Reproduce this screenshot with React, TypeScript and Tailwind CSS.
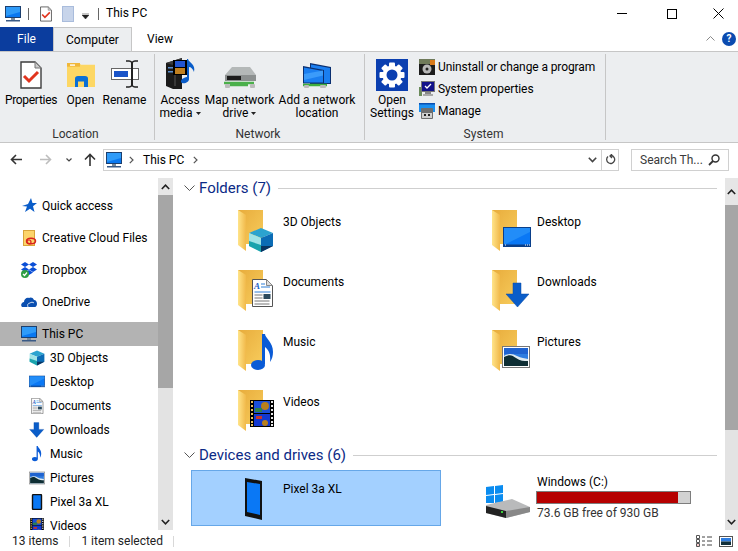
import React from "react";

const Monitor = ({ s = 16 }: { s?: number }) => (
  <svg width={s} height={s} viewBox="0 0 16 16" className="shrink-0">
    <rect x="0.5" y="0.5" width="15" height="11" fill="#0a78f0" stroke="#1c3f6e" />
    <path d="M1 1h14v5L1 10z" fill="#2f9bf8" />
    <rect x="6" y="12" width="4" height="2" fill="#7a8a9a" />
    <rect x="1" y="14" width="14" height="1.5" fill="#3a5a86" />
  </svg>
);

const CheckDoc = ({ w = 11, h = 15 }: { w?: number; h?: number }) => (
  <svg width={w} height={h} viewBox="0 0 22 28" className="shrink-0">
    <path d="M1 1h14l6 6v20H1z" fill="#fff" stroke="#3d3d3d" strokeWidth="1.4" />
    <path d="M15 1v6h6z" fill="#ccc" stroke="#777" />
    <path d="M4 15l5 5 9-9" fill="none" stroke="#e1341e" strokeWidth="3" />
  </svg>
);

const Folder = ({ children }: { children?: React.ReactNode }) => (
  <svg width="48" height="48" viewBox="0 0 48 48" className="shrink-0 overflow-visible">
    <defs>
      <linearGradient id="fb" x1="0" x2="1" y1="0" y2="1">
        <stop offset="0" stopColor="#e8ac3c" />
        <stop offset="1" stopColor="#f7cc5c" />
      </linearGradient>
      <linearGradient id="ff" x1="0" x2="1" y1="0" y2="0">
        <stop offset="0" stopColor="#ffe48a" />
        <stop offset="1" stopColor="#f1b94a" />
      </linearGradient>
    </defs>
    <rect x="0" y="0" width="25" height="34" fill="url(#fb)" />
    <path d="M0 0l8 5v36L0 35z" fill="url(#ff)" />
    <path d="M8 34h6v4l-6 3z" fill="#fff" />
    {children}
  </svg>
);

const CubeParts = () => (
  <>
    <path d="M23 18l12 5-12 5-12-5z" fill="#2ba3cf" />
    <path d="M11 23l12 5v14l-12-6z" fill="#9fe3e6" />
    <path d="M11 31l12 4v7l-12-6z" fill="#1aa3ad" />
    <path d="M23 28l12-5v13l-12 6z" fill="#0b6cb5" />
    <path d="M23 36l12 0-12 6z" fill="#0a3460" />
  </>
);

const DocParts = () => (
  <>
    <path d="M14.5 9.5h14l6 6v21h-20z" fill="#fff" stroke="#555" />
    <path d="M28.5 9.5v6h6z" fill="#ddd" stroke="#888" />
    <text x="16" y="19" fontSize="9" fontStyle="italic" fontWeight="700" fill="#1c5fc4" fontFamily="Liberation Serif, serif">A</text>
    <path d="M23 14h4M23 17h9" stroke="#2f7fd6" strokeWidth="1" />
    <path d="M16.5 22h16" stroke="#2f7fd6" strokeWidth="1" />
    <path d="M16.5 25h8M16.5 28h8M16.5 31h15M16.5 34h15" stroke="#777" strokeWidth="1" />
    <rect x="25.5" y="24" width="7" height="5" fill="#2b4a5e" />
  </>
);

const NoteParts = () => (
  <>
    <path d="M24 4h3c0 4 8 8 8 18 0 4-1 7-3 10 1-7-1-12-5-15v17h-3z" fill="#0a5bd6" />
    <ellipse cx="20" cy="35" rx="7" ry="5" fill="#0a5bd6" />
  </>
);

const DesktopParts = () => (
  <>
    <rect x="11.5" y="17.5" width="27" height="19" fill="#0a78f5" stroke="#0a3f8a" />
    <path d="M12 18h26v4L12 35z" fill="#2c96fa" opacity="0.7" />
    <rect x="12" y="34.5" width="26" height="1.5" fill="#0a3f8a" />
    <path d="M13 35h1M33 35h1M35 35h1M37 35h1" stroke="#fff" />
  </>
);

const ArrowParts = () => (
  <path d="M21 13h8v11h8L25.500 37 14 24h7z" fill="#0a5dc9" stroke="#0a4aa5" strokeWidth="0.5" />
);

const PictureParts = () => (
  <>
    <rect x="10.500" y="16.500" width="27" height="21" fill="#fff" stroke="#777" />
    <rect x="12" y="18" width="24" height="18" fill="#2f7de0" />
    <rect x="12" y="18" width="24" height="6" fill="#1f63d0" />
    <path d="M12 26c5-3 9-2 13 0s8 2 11 3v7H12z" fill="#dfeaf0" />
    <path d="M12 27c6-3 8-2 12 1s8 3 12 3v5H12z" fill="#0e2e34" />
  </>
);

const FilmParts = () => (
  <>
    <rect x="12" y="10" width="24" height="27" fill="#000" />
    {[11, 15, 19, 23, 27, 31, 34].map((y) => (
      <React.Fragment key={y}>
        <rect x="13" y={y} width="2" height="2" fill="#e8c060" />
        <rect x="33" y={y} width="2" height="2" fill="#e8e8e8" />
      </React.Fragment>
    ))}
    <rect x="16" y="11" width="16" height="12" fill="#1a4fd8" />
    <rect x="16" y="24" width="16" height="12" fill="#1238d0" />
    <circle cx="27" cy="16" r="4" fill="#b8801c" />
    <rect x="17" y="18" width="7" height="4" fill="#2f804a" />
    <circle cx="27" cy="33" r="3" fill="#b8801c" />
    <rect x="18" y="26" width="6" height="3" fill="#c9342a" />
  </>
);

const small = (children: React.ReactNode, vb = "0 0 48 48") => (
  <svg width="16" height="16" viewBox={vb} className="shrink-0">
    {children}
  </svg>
);

const Nav3D = () => small(<CubeParts />, "10 17 26 26");
const NavDesktop = () => small(<DesktopParts />, "11 14 28 28");
const NavDoc = () => small(<DocParts />, "10 9 28 28");
const NavArrow = () => small(<ArrowParts />, "13 12 26 26");
const NavNote = () => small(<NoteParts />, "6 4 38 38");
const NavPic = () => small(<PictureParts />, "10 13 28 28");
const NavVideo = () => small(<FilmParts />, "10 10 28 28");

const Phone = ({ s = 16 }: { s?: number }) => (
  <svg width={s} height={s} viewBox="0 0 16 16" className="shrink-0">
    <rect x="3.500" y="0.500" width="9" height="15" rx="1" fill="#0a78f5" stroke="#111" strokeWidth="1.400" />
  </svg>
);

const Chevron = ({ className = "" }: { className?: string }) => (
  <svg width="11" height="7" viewBox="0 0 11 7" className={className}>
    <path d="M0.500 0.500l5 5 5-5" fill="none" stroke="#555" strokeWidth="1" />
  </svg>
);

const Caret = () => (
  <svg width="5" height="3" viewBox="0 0 5 3" className="ml-[3px] inline-block align-middle">
    <path d="M0 0h5L2.500 3z" fill="#222" />
  </svg>
);

function NavRow({ icon, label, sub, sel, gap }: { icon: React.ReactNode; label: string; sub?: boolean; sel?: boolean; gap?: boolean }) {
  return (
    <div className={`flex h-6 items-center shrink-0 ${sel ? "bg-[#b3b3b3]" : ""} ${gap ? "mb-2" : ""} ${sub ? "pl-[29px]" : "pl-[21px]"}`}>
      <span className="flex w-[21px] shrink-0 items-center">{icon}</span>
      <span className="whitespace-nowrap">{label}</span>
    </div>
  );
}

function BigBtn({ w, icon, lines }: { w: string; icon: React.ReactNode; lines: React.ReactNode[] }) {
  return (
    <div className={`flex flex-col items-center ${w}`}>
      <div className="flex h-[33px] items-end justify-center">{icon}</div>
      <div className="mt-[5px] text-center leading-[13px] whitespace-nowrap">
        {lines.map((l, i) => (
          <div key={i}>{l}</div>
        ))}
      </div>
    </div>
  );
}

const FolderCell = ({ name, children }: { name: string; children: React.ReactNode }) => (
  <div className="flex pt-[2px] pl-[46px]">
    <Folder>{children}</Folder>
    <span className="mt-[4px] ml-[-3px] leading-[16px]">{name}</span>
  </div>
);

const Heading = ({ text }: { text: string }) => (
  <div className="flex h-5 items-center pr-[8px] pl-[10px]">
    <Chevron />
    <span className="ml-[4px] text-[15px] text-[#0b2a86] whitespace-nowrap">{text}</span>
    <span className="ml-[7px] h-px flex-1 bg-[#cfcfcf]" />
  </div>
);

const Scroll = ({ w, nav }: { w: string; nav?: boolean }) => (
  <div className={`flex shrink-0 flex-col bg-[#e3e3e3] ${w}`}>
    <div className={`flex items-center justify-center bg-[#e6e6e6] ${nav ? "h-[17px]" : "h-[27px]"}`}>
      <svg width="9" height="6" viewBox="0 0 9 6"><path d="M0.800 5L4.500 1.200 8.200 5" fill="none" stroke="#222" strokeWidth="1.600" /></svg>
    </div>
    <div className={`bg-[#a6a6a6] ${nav ? "h-[193px]" : "h-[225px]"}`} />
    <div className="flex-1" />
    <div className="flex h-[17px] items-center justify-center">
      <svg width="9" height="6" viewBox="0 0 9 6"><path d="M0.800 1L4.500 4.800 8.200 1" fill="none" stroke="#222" strokeWidth="1.600" /></svg>
    </div>
  </div>
);

export default function App() {
  return (
    <div className="flex h-[551px] w-[738px] flex-col overflow-hidden bg-white font-[Roboto,sans-serif] text-[12px] text-black">
      {/* Title bar */}
      <div className="flex h-[27px] items-center pl-[5px]">
        <Monitor />
        <span className="ml-[7px] h-[12px] w-px bg-[#666]" />
        <span className="ml-[11px] flex"><CheckDoc w={12} h={16} /></span>
        <span className="ml-[10px] h-[16px] w-[12px] border border-[#a9bcdc] bg-[#c7d4ea]" />
        <svg width="7" height="6" viewBox="0 0 7 6" className="ml-[8px] mt-[4px]"><path d="M0 0h7M0 2h7L3.500 6z" fill="#222" stroke="#222" strokeWidth="0.500" /></svg>
        <span className="ml-[9px] h-[12px] w-px bg-[#666]" />
        <span className="ml-[7px] mb-[1px] text-[12px] whitespace-nowrap">This PC</span>
        <div className="ml-auto flex items-center">
          <svg width="10" height="1" className="mr-[40px]"><rect width="10" height="1" fill="#000" /></svg>
          <svg width="10" height="10" className="mr-[36px]"><rect x="0.500" y="0.500" width="9" height="9" fill="none" stroke="#000" /></svg>
          <svg width="11" height="11" className="mr-[14px]"><path d="M0.500 0.500l10 10M10.500 0.500l-10 10" stroke="#000" strokeWidth="1" /></svg>
        </div>
      </div>
      {/* Tabs */}
      <div className="relative flex h-[24px] items-stretch">
        <div className="flex w-[53px] items-center justify-center bg-[#0b3d9e] text-white">File</div>
        <div className="z-10 flex h-[24px] w-[79px] items-center justify-center border-x border-t border-[#c6c6c6] bg-[#eceef0]">Computer</div>
        <div className="ml-[15px] flex items-center">View</div>
        <div className="ml-auto flex items-center pr-[2px] pb-[1px]">
          <svg width="9" height="5" viewBox="0 0 9 5" className="mr-[7px]"><path d="M0.500 4.500l4-4 4 4" fill="none" stroke="#888" strokeWidth="1" /></svg>
          <span className="flex h-[14px] w-[14px] items-center justify-center rounded-full bg-[#0b4bb0] text-[10px] leading-none font-bold text-white">?</span>
        </div>
      </div>
      {/* Ribbon */}
      <div className="flex h-[92px] shrink-0 border-y border-[#c6c6c6] bg-[#eceef0]">
        <Group w="w-[155px]" label="Location">
          <BigBtn w="w-[62px]" icon={<CheckDoc w={22} h={28} />} lines={[<span className="tracking-[-0.3px]">Properties</span>]} />
          <BigBtn
            w="w-[37px]"
            icon={
              <svg width="28" height="24" viewBox="0 0 28 26" preserveAspectRatio="none" className="mb-[2px]">
                <path d="M0 0h12l2 2h14v24H0z" fill="#fdd764" />
                <path d="M0 0h13v4H0z" fill="#f0b73a" />
                <path d="M3 1.500h5v1.500H3z" fill="#fff" />
                <path d="M8 26V17a3 3 0 013-3h7a3 3 0 013 3v9h-4v-6h-6v6z" fill="#0a6fd6" />
              </svg>
            }
            lines={["Open"]}
          />
          <BigBtn
            w="w-[51px]"
            icon={
              <svg width="28" height="28" viewBox="0 0 28 28" className="mb-[1px]">
                <rect x="0.500" y="8.500" width="27" height="11" fill="#fff" stroke="#666" />
                <rect x="3" y="11" width="14" height="6" fill="#1a54c8" />
                <path d="M15 1h3c1 0 2 .5 3 1.500C22 1.500 23 1 24 1h3M15 27h3c1 0 2-.5 3-1.500 1 1 2 1.500 3 1.500h3" fill="none" stroke="#222" strokeWidth="1.600" />
                <rect x="20" y="2" width="2" height="24" fill="#222" />
              </svg>
            }
            lines={["Rename"]}
          />
        </Group>
        <Group w="w-[210px]" label="Network" pl="pl-[5px]">
          <BigBtn
            w="w-[40px]"
            icon={
              <svg width="32" height="32" viewBox="0 0 32 32">
                <path d="M2 6l16-5v31H9l-7-3z" fill="#1a1a1a" />
                <path d="M18 1L2 6l7 2 9-3z" fill="#3a3a3a" />
                <path d="M11 10v19" stroke="#555" />
                <rect x="4" y="10" width="5" height="1.500" fill="#5b8fd0" />
                <rect x="4" y="14" width="5" height="1.500" fill="#5b8fd0" />
                <rect x="9" y="3" width="14" height="15" fill="#000" />
                <rect x="11" y="4" width="10" height="6" fill="#2255d0" />
                <rect x="11" y="11" width="10" height="6" fill="#c08020" />
                <path d="M24 2c1 4 8 5 6 13-1-3-3-5-5-5v12c0 3-4 5-7 4-2-1-1-4 2-5 1-1 3-1 3-1V2z" fill="#0a5dc9" />
              </svg>
            }
            lines={[<>Access</>, <>media<Caret /></>]}
          />
          <BigBtn
            w="w-[79px]"
            icon={
              <svg width="32" height="22" viewBox="0 0 32 22">
                <path d="M8 0h18l6 8v6H1V8z" fill="#b4b8b8" />
                <path d="M1 8h31v6H1z" fill="#8c9090" />
                <path d="M3 9h14v4H3z" fill="#1c1c1c" />
                <path d="M0 16h30M6 18h18" stroke="#4bb04b" strokeWidth="2.500" />
                <rect x="1" y="17" width="5" height="4" rx="1" fill="#bbb" />
                <rect x="26" y="17" width="5" height="4" rx="1" fill="#bbb" />
              </svg>
            }
            lines={[<>Map network</>, <>drive<Caret /></>]}
          />
          <BigBtn
            w="w-[76px]"
            icon={
              <svg width="28" height="26" viewBox="0 0 28 26">
                <path d="M7 0l21 4v17H7z" fill="#0a2f70" />
                <path d="M8 1.500l19 3.500v15H8z" fill="#1a7ef0" />
                <path d="M0 3l21 4v13.500H0z" fill="#0a2f70" />
                <path d="M1 4.500l19 3.500v11.500H1z" fill="#1a7ef0" />
                <path d="M1 11l19-3.500v5L1 17z" fill="#3b9bfa" />
                <path d="M0 22h24" stroke="#3fae3f" strokeWidth="2.500" />
                <rect x="1" y="22" width="5" height="3" rx="1" fill="#bbb" />
                <rect x="17" y="22" width="6" height="3" rx="1" fill="#bbb" />
              </svg>
            }
            lines={[<>Add a network</>, <>location</>]}
          />
        </Group>
        <Group w="w-[241px]" label="System" pl="pl-[7px]">
          <BigBtn
            w="w-[40px]"
            icon={
              <svg width="32" height="32" viewBox="0 0 32 32" className="mb-[-2px]">
                <rect width="32" height="32" fill="#0b3fb0" />
                <g fill="#fff">
                  {[0, 45, 90, 135].map((a) => (
                    <rect key={a} x="13" y="3.500" width="6" height="25" rx="1" transform={`rotate(${a} 16 16)`} />
                  ))}
                  <circle cx="16" cy="16" r="9.500" />
                </g>
                <circle cx="16" cy="16" r="5.500" fill="#0b3fb0" />
              </svg>
            }
            lines={["Open", "Settings"]}
          />
          <div className="ml-[7px] flex flex-col">
            <SmallRow label="Uninstall or change a program">
              <svg width="16" height="16" viewBox="0 0 16 16">
                <rect y="0" width="16" height="16" fill="#1c1c1c" />
                <rect x="0" y="0" width="16" height="5" fill="#6f7a5a" />
                <rect x="11" y="1" width="5" height="5" fill="#d97a1a" />
                <circle cx="8" cy="10" r="4.500" fill="#b8b8b8" />
                <circle cx="8" cy="10" r="1.500" fill="#222" />
              </svg>
            </SmallRow>
            <SmallRow label="System properties">
              <svg width="16" height="16" viewBox="0 0 16 16">
                <rect x="0" y="6" width="3" height="9" fill="#6a8a5a" />
                <rect x="2.500" y="0.500" width="13" height="10" fill="#12128a" stroke="#777" />
                <path d="M6 5l2 2 4-4" fill="none" stroke="#fff" strokeWidth="1.300" />
                <rect x="6" y="11" width="6" height="2" fill="#888" />
                <rect x="4" y="13" width="10" height="2" fill="#aaa" />
              </svg>
            </SmallRow>
            <SmallRow label="Manage">
              <svg width="16" height="16" viewBox="0 0 16 16">
                <rect y="0" width="16" height="9" fill="#1a8ff0" />
                <rect y="0" width="16" height="1.500" fill="#0a4fb0" />
                <rect x="2" y="5" width="12" height="11" rx="1" fill="#6e6e6e" />
                <rect x="3" y="10" width="10" height="5" fill="#cfcfcf" />
                <rect x="5" y="11" width="2" height="2" fill="#222" />
                <rect x="9" y="11" width="2" height="2" fill="#222" />
              </svg>
            </SmallRow>
          </div>
        </Group>
      </div>
      {/* Address row */}
      <div className="flex h-[35px] shrink-0 items-center pb-[2px]">
        <svg width="12" height="11" viewBox="0 0 12 11" className="ml-[10px]"><path d="M12 5.500H1.500M6 1L1.500 5.500 6 10" fill="none" stroke="#333" strokeWidth="1.600" /></svg>
        <svg width="12" height="11" viewBox="0 0 12 11" className="ml-[18px]"><path d="M0 5.500h10.500M6 1l4.500 4.500L6 10" fill="none" stroke="#bdbdbd" strokeWidth="1.600" /></svg>
        <svg width="6" height="4" viewBox="0 0 6 4" className="ml-[14px]"><path d="M0.500 0.500L3 3l2.500-2.500" fill="none" stroke="#444" strokeWidth="1.200" /></svg>
        <svg width="12" height="13" viewBox="0 0 12 13" className="ml-[12px]"><path d="M6 13V1.500M1 6.500l5-5 5 5" fill="none" stroke="#333" strokeWidth="1.600" /></svg>
        <div className="ml-[7px] flex h-[22px] w-[516px] items-center border border-[#d0d0d0]">
          <span className="ml-[2px]"><Monitor /></span>
          <svg width="5" height="8" viewBox="0 0 5 8" className="ml-[7px]"><path d="M0.800 0.800L4 4 0.800 7.200" fill="none" stroke="#555" strokeWidth="1.200" /></svg>
          <span className="ml-[9px] whitespace-nowrap">This PC</span>
          <svg width="5" height="8" viewBox="0 0 5 8" className="ml-[9px]"><path d="M0.800 0.800L4 4 0.800 7.200" fill="none" stroke="#555" strokeWidth="1.200" /></svg>
          <svg width="9" height="6" viewBox="0 0 9 6" className="mr-[4px] ml-auto"><path d="M0.800 0.800L4.500 4.500 8.200 0.800" fill="none" stroke="#444" strokeWidth="1.600" /></svg>
          <div className="flex h-full w-[17px] items-center justify-center border-l border-[#d0d0d0]">
            <svg width="11" height="11" viewBox="0 0 11 11"><path d="M6 1.500A4 4 0 113 2.500M7 0L5 2l2 2" fill="none" stroke="#444" strokeWidth="1.300" /></svg>
          </div>
        </div>
        <div className="ml-[12px] flex h-[22px] w-[98px] items-center border border-[#d0d0d0] pl-[8px] text-[#3a3a3a]">
          <span className="whitespace-nowrap">Search Th...</span>
          <svg width="12" height="12" viewBox="0 0 12 12" className="mr-[8px] ml-auto"><circle cx="7.500" cy="4.500" r="3.500" fill="none" stroke="#333" strokeWidth="1.400" /><path d="M5 7l-4 4" stroke="#333" strokeWidth="1.800" /></svg>
        </div>
      </div>
      {/* Main */}
      <div className="flex min-h-0 flex-1">
        <div className="flex h-full w-[158px] shrink-0 flex-col overflow-hidden pt-[16px]">
          <NavRow gap label="Quick access" icon={<svg width="16" height="16" viewBox="0 0 16 16"><path d="M10 0l1.500 5H16l-4 3.200L13.500 14 9 10.800 4 14l2-5.500-5-.5 6-2z" fill="#0a5dc9" /></svg>} />
          <NavRow gap label="Creative Cloud Files" icon={<svg width="16" height="16" viewBox="0 0 16 16"><rect x="2.500" y="0.500" width="11" height="15" fill="#fcd46a" stroke="#d9a43a" /><ellipse cx="10" cy="11" rx="4.500" ry="2.800" fill="none" stroke="#d9231e" strokeWidth="1.500" /><ellipse cx="8" cy="12" rx="2" ry="2" fill="none" stroke="#d9231e" strokeWidth="1.200" /></svg>} />
          <NavRow gap label="Dropbox" icon={<svg width="16" height="16" viewBox="0 0 16 16"><path d="M4 0l4 2.500L4 5 0 2.500zM12 0l4 2.500L12 5 8 2.500zM4 5l4 2.500L4 10 0 7.500zM12 5l4 2.500L12 10 8 7.500zM8 8l4 2.500L8 13 4 10.500z" fill="#0a4ed6" /><circle cx="4" cy="12" r="4" fill="#2f9e44" /><path d="M2 12l1.500 1.500L6 10.500" fill="none" stroke="#fff" strokeWidth="1.200" /></svg>} />
          <NavRow gap label="OneDrive" icon={<svg width="16" height="16" viewBox="0 0 16 16"><path d="M1 13c-2-2 0-5 2-5 0-3 3-5 5-4 1-1 4-1 5 2 2 0 3 2 3 4 0 1-1 3-2 3z" fill="#0b4fb0" /><path d="M7 13c-1-2 0-4 2-4 1-1 3-1 4 0" fill="none" stroke="#fff" strokeWidth="0.800" /></svg>} />
          <NavRow sel label="This PC" icon={<Monitor />} />
          <NavRow sub label="3D Objects" icon={<Nav3D />} />
          <NavRow sub label="Desktop" icon={<NavDesktop />} />
          <NavRow sub label="Documents" icon={<NavDoc />} />
          <NavRow sub label="Downloads" icon={<NavArrow />} />
          <NavRow sub label="Music" icon={<NavNote />} />
          <NavRow sub label="Pictures" icon={<NavPic />} />
          <NavRow sub label="Pixel 3a XL" icon={<Phone />} />
          <NavRow sub label="Videos" icon={<NavVideo />} />
        </div>
        <Scroll w="w-[15px]" nav />
        <div className="min-w-0 flex-1 overflow-hidden pl-[1px]">
          <Heading text="Folders (7)" />
          <div className="mt-[10px] ml-[18px] grid h-[237px] grid-cols-[254px_254px] grid-rows-[60px_60px_60px_57px]">
            <FolderCell name="3D Objects"><CubeParts /></FolderCell>
            <FolderCell name="Desktop"><DesktopParts /></FolderCell>
            <FolderCell name="Documents"><DocParts /></FolderCell>
            <FolderCell name="Downloads"><ArrowParts /></FolderCell>
            <FolderCell name="Music"><NoteParts /></FolderCell>
            <FolderCell name="Pictures"><PictureParts /></FolderCell>
            <FolderCell name="Videos"><FilmParts /></FolderCell>
          </div>
          <Heading text="Devices and drives (6)" />
          <div className="mt-[5px] ml-[17px] flex">
            <div className="flex h-[56px] w-[250px] border border-[#66a7e8] bg-[#a3d0ff] pt-[7px] pl-[53px]">
              <svg width="19" height="43" viewBox="0 0 19 43" className="shrink-0">
                <path d="M0 0l17 3v39L0 38z" fill="#111" />
                <path d="M2 4l13 2v31L2 34z" fill="#0a78f5" />
              </svg>
              <span className="mt-[3px] ml-[19px] leading-[16px]">Pixel 3a XL</span>
            </div>
            <div className="ml-[45px] flex pt-[4px]">
              <svg width="44" height="34" viewBox="0 0 44 34" className="mt-[11px] shrink-0">
                <path d="M0 0l8-1v8l-8 1zM9-1l8-1v8l-8 1zM0 9l8-1v8H0zM9 8l8-1v8l-8 1z" fill="#0a8cf0" transform="translate(0 2)" />
                <path d="M0 20l26-6 18 8v5L20 33 0 28z" fill="#b9babb" />
                <path d="M0 21l20 5v7L0 28z" fill="#222" />
                <path d="M20 26l24-4v5L20 33z" fill="#888" />
                <rect x="15" y="26" width="2" height="2" fill="#3ad13a" />
              </svg>
              <div className="ml-[6px] flex w-[156px] flex-col">
                <div className="ml-[1px] leading-[16px]">Windows (C:)</div>
                <div className="mt-[1px] h-[13px] w-[155px] border border-[#7d7d7d] bg-[#d2d2d2]">
                  <div className="h-full bg-[#b60000]" style={{ width: "92%" }} />
                </div>
                <div className="mt-[1px] ml-[1px] leading-[16px] text-[#333] whitespace-nowrap">73.6 GB free of 930 GB</div>
              </div>
            </div>
          </div>
        </div>
        <Scroll w="w-[13px]" />
      </div>
      {/* Status */}
      <div className="flex h-[21px] shrink-0 items-center pt-[1px] pl-[12px] text-[#222]">
        <span className="whitespace-nowrap">13 items</span>
        <span className="ml-[11px] h-[11px] w-px bg-[#d8d8d8]" />
        <span className="ml-[11px] whitespace-nowrap">1 item selected</span>
        <span className="ml-[10px] h-[11px] w-px bg-[#d8d8d8]" />
        <svg width="16" height="13" viewBox="0 0 16 13" className="ml-auto">
          <path d="M0.500 0.500h3v3h-3zM0.500 4.500h3v3h-3zM0.500 8.500h3v3h-3z" fill="none" stroke="#555" />
          <path d="M6 2h3M11 2h5M6 6h3M11 6h5M6 10h3M11 10h5" stroke="#444" />
          <rect x="1.500" y="9.500" width="1" height="1" fill="#d33" />
        </svg>
        <svg width="14" height="11" viewBox="0 0 14 11" className="mr-[5px] ml-[7px]">
          <rect x="0.500" y="0.500" width="13" height="10" fill="#fff" stroke="#555" />
          <rect x="2" y="2" width="10" height="3.500" fill="#2f7de0" />
          <rect x="2" y="5.500" width="10" height="3.500" fill="#12303a" />
        </svg>
      </div>
    </div>
  );
}

function Group({ w, label, pl, children }: { w: string; label: string; pl?: string; children: React.ReactNode }) {
  return (
    <div className={`relative flex shrink-0 flex-col ${w}`}>
      <div className={`flex h-[74px] pt-[4px] ${pl ?? ""}`}>{children}</div>
      <div className="h-[16px] pr-[4px] text-center leading-[16px] text-[#333]">{label}</div>
      <span className="absolute top-[2px] right-0 bottom-[2px] w-px bg-[#c6c6c6]" />
    </div>
  );
}

function SmallRow({ label, children }: { label: string; children: React.ReactNode }) {
  return (
    <div className="flex h-[22px] items-center whitespace-nowrap">
      {children}
      <span className="ml-[3px] tracking-[-0.1px]">{label}</span>
    </div>
  );
}
